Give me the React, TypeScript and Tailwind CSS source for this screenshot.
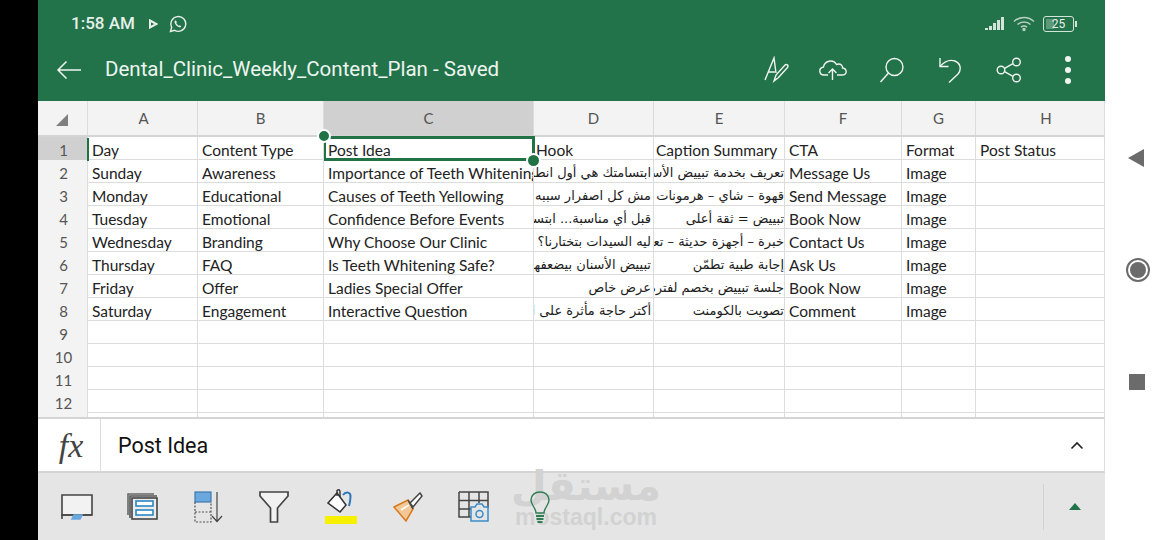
const cols = ["A", "B", "C", "D", "E", "F", "G", "H"];
const rows: (string | null)[][] = [
  ["Day", "Content Type", "Post Idea", "Hook", "Caption Summary", "CTA", "Format", "Post Status"],
  ["Sunday", "Awareness", "Importance of Teeth Whitening", "ابتسامتك هي أول انطباع", "تعريف بخدمة تبييض الأسنان", "Message Us", "Image", ""],
  ["Monday", "Educational", "Causes of Teeth Yellowing", "مش كل اصفرار سببه", "قهوة – شاي – هرمونات", "Send Message", "Image", ""],
  ["Tuesday", "Emotional", "Confidence Before Events", "قبل أي مناسبة... ابتسامتك", "تبييض = ثقة أعلى", "Book Now", "Image", ""],
  ["Wednesday", "Branding", "Why Choose Our Clinic", "ليه السيدات بتختارنا؟", "خبرة – أجهزة حديثة – تعامل راقي", "Contact Us", "Image", ""],
  ["Thursday", "FAQ", "Is Teeth Whitening Safe?", "تبييض الأسنان بيضعفها؟ لا", "إجابة طبية تطمّن", "Ask Us", "Image", ""],
  ["Friday", "Offer", "Ladies Special Offer", "عرض خاص", "جلسة تبييض بخصم لفترة محدودة", "Book Now", "Image", ""],
  ["Saturday", "Engagement", "Interactive Question", "أكتر حاجة مأثرة على ابتسامتك", "تصويت بالكومنت", "Comment", "Image", ""],
  ["", "", "", "", "", "", "", ""],
  ["", "", "", "", "", "", "", ""],
  ["", "", "", "", "", "", "", ""],
  ["", "", "", "", "", "", "", ""],
];

const gridCols = "grid grid-cols-[50px_110px_126px_210px_120px_131px_117px_74px_129px]";

function Cell({ value, column }: { value: string | null; column: number }) {
  const isHeadRtlCol = column === 3 || column === 4;
  const isRtlRow = isHeadRtlCol && value !== "Hook" && value !== "Caption Summary";
  return (
    <div
      dir={isRtlRow ? "rtl" : "ltr"}
      className={`h-full overflow-hidden whitespace-nowrap border-r border-[#dcdcdc] ${
        isRtlRow
          ? `font-['DejaVu_Sans',sans-serif] text-[13px] leading-[26px] text-[#1c1c1c] ${column === 3 ? "pr-[2px]" : "pr-0"}`
          : `text-[15.5px] leading-[26px] text-[#222] ${isHeadRtlCol ? "pl-[2px]" : "pl-[4px]"}`
      }`}
    >
      {value}
    </div>
  );
}

function Table() {
  return (
    <div className="relative h-[317px] overflow-hidden bg-white font-['Lato',sans-serif]">
      <div className={`${gridCols} h-[36px] border-b-2 border-[#d4d4d4] bg-[#f3f3f3] text-[15px] text-[#555]`}>
        <div className="flex items-center justify-center border-r border-[#dcdcdc]">
          <svg width="14" height="14" viewBox="0 0 14 14" className="mr-[2px] mt-[3px]">
            <path d="M13 1V13H1Z" fill="#7f7f7f" />
          </svg>
        </div>
        {cols.map((c) => (
          <div
            key={c}
            className={`flex items-center justify-center border-r border-[#dcdcdc] ${c === "C" ? "bg-[#d0d0d0]" : ""} ${
              c === "H" ? "pl-[12px]" : c === "A" ? "pl-[2px]" : ""
            }`}
          >
            {c}
          </div>
        ))}
      </div>
      {rows.map((r, i) => (
        <div key={i} className={`${gridCols} h-[23px] border-b border-[#dcdcdc]`}>
          <div
            className={`border-r border-[#dcdcdc] pl-[2px] text-center text-[15px] leading-[26px] text-[#555] ${
              i === 0 ? "bg-[#d0d0d0]" : "bg-[#f3f3f3]"
            }`}
          >
            {i + 1}
          </div>
          {r.map((v, j) => (
            <Cell key={j} value={v} column={j} />
          ))}
        </div>
      ))}
      <div className={`${gridCols} h-[23px]`}>
        <div className="border-r border-[#dcdcdc] bg-[#f3f3f3]" />
        {cols.map((c) => (
          <div key={c} className="border-r border-[#dcdcdc]" />
        ))}
      </div>
      {/* selection overlay */}
      <div className="absolute left-[286px] top-[35px] h-[25px] w-[211px] border-[3px] border-[#217346] [border-left-width:2px]" />
      <div className="absolute left-[49px] top-[37px] h-[23px] w-[2px] bg-[#217346]" />
      <div className="absolute left-[279px] top-[28px] h-[14px] w-[14px] rounded-full border-2 border-white bg-[#217346]" />
      <div className="absolute left-[488px] top-[52px] h-[15px] w-[15px] rounded-full border-2 border-white bg-[#217346]" />
    </div>
  );
}

function Header() {
  return (
    <div className="flex h-[101px] flex-col bg-[#22734a] text-white">
      <div className="flex h-[46px] items-center pl-[33px] pr-[31px] pt-[2px]">
        <span className="font-['Roboto',sans-serif] text-[17px] font-medium text-[#e8f0ea]">1:58 AM</span>
        <svg width="10" height="10" viewBox="0 0 10 10" className="ml-[13px]" fill="none" stroke="#e8f0ea" strokeWidth="2">
          <path d="M2 1.5L8.5 5L2 8.5Z" />
        </svg>
        <svg width="18" height="18" viewBox="0 0 18 18" className="ml-[11px]" fill="none" stroke="#e8f0ea" strokeWidth="1.4">
          <path d="M1.5 16.5L2.7 12.2A7.4 7.4 0 1 1 5.6 15.3Z" />
          <path d="M6 5.5C5 6.5 5.5 8.5 7.3 10.4C9.2 12.2 11.2 12.8 12.3 11.7L11 10.2L9.8 10.8C8.8 10.3 7.8 9.2 7.3 8.1L7.9 7L6.8 5.4Z" fill="#e8f0ea" stroke="none" />
        </svg>
        <div className="ml-auto flex items-center">
          <svg width="22" height="14" viewBox="0 0 22 14" fill="#d5e4da">
            <rect x="0" y="11" width="3" height="2" />
            <rect x="4" y="9" width="3" height="4" />
            <rect x="8" y="6" width="3" height="7" />
            <rect x="12" y="3" width="3" height="10" />
            <rect x="16" y="0" width="3" height="13" />
          </svg>
          <svg width="24" height="16" viewBox="0 0 24 16" fill="none" stroke="#b9d0c1" strokeWidth="1.5" className="ml-[6px]">
            <path d="M1 5.5C6.5 0 15.5 0 21 5.5" />
            <path d="M4.5 8.5C8 5.2 14 5.2 17.5 8.5" />
            <path d="M8 11.2C9.8 9.8 12.2 9.8 14 11.2" />
            <circle cx="11" cy="13.5" r="1" fill="#d5e4da" />
          </svg>
          <div className="relative ml-[6px] flex h-[16px] w-[31px] items-center justify-center rounded-[3px] border border-[#d5e4da] font-['Roboto',sans-serif] text-[12px] leading-none text-[#e8f0ea]">
            <div className="absolute inset-y-[2px] left-[2px] w-[8px] bg-[#5f9a78]" />
            <span className="relative">25</span>
            <div className="absolute right-[-4px] top-[4px] h-[6px] w-[2px] bg-[#d5e4da]" />
          </div>
        </div>
      </div>
      <div className="flex h-[55px] items-center pb-[8px] pl-[18px] pr-[34px]">
        <svg width="26" height="20" viewBox="0 0 26 20" fill="none" stroke="#f0f5f1" strokeWidth="1.5">
          <path d="M25 10H2M10.5 1.5L2 10L10.5 18.5" />
        </svg>
        <span className="ml-[23px] font-['Roboto',sans-serif] text-[20.5px] text-[#eef5f0]">
          Dental_Clinic_Weekly_Content_Plan - Saved
        </span>
        <div className="ml-auto flex items-center">
          <svg width="26" height="28" viewBox="0 0 26 28" fill="none" stroke="#f0f5f1" strokeWidth="1.4">
            <path d="M1 24L10 2L12 17M4 16H11" />
            <path d="M10 25L12 19L21 9C22.5 7.5 25 9.5 23.7 11.3L14.5 21.5Z" />
          </svg>
          <svg width="30" height="22" viewBox="0 0 30 22" fill="none" stroke="#f0f5f1" strokeWidth="1.4" className="ml-[28px]">
            <path d="M10 16H6C1 16 0 9 5.5 8C6.5 2 15 -0.5 18.5 5.5C23 4 25 7 24.5 9C29 9.5 30 16 24 16H19" />
            <path d="M14.5 21V10M10.5 14L14.5 10L18.5 14" />
          </svg>
          <svg width="26" height="26" viewBox="0 0 26 26" fill="none" stroke="#f0f5f1" strokeWidth="1.4" className="ml-[31px]">
            <circle cx="15.5" cy="10" r="8.5" />
            <path d="M9.5 16L1.5 25" />
          </svg>
          <svg width="24" height="26" viewBox="0 0 24 26" fill="none" stroke="#f0f5f1" strokeWidth="1.4" className="ml-[33px]">
            <path d="M2 1V9.5H10.5" />
            <path d="M2 9.5C6 5 11 2 17 4C23 6.5 23.5 13 20 17L11 25.5" />
          </svg>
          <svg width="26" height="26" viewBox="0 0 26 26" fill="none" stroke="#f0f5f1" strokeWidth="1.4" className="ml-[34px]">
            <circle cx="20.5" cy="5" r="3.8" />
            <circle cx="5" cy="13" r="3.8" />
            <circle cx="20.5" cy="21" r="3.8" />
            <path d="M8.5 11.3L17 6.7M8.5 14.7L17 19.3" />
          </svg>
          <div className="ml-[43px] flex w-[6px] flex-col gap-[5px]">
            <div className="h-[6px] w-[6px] rounded-full bg-[#f0f5f1]" />
            <div className="h-[6px] w-[6px] rounded-full bg-[#f0f5f1]" />
            <div className="h-[6px] w-[6px] rounded-full bg-[#f0f5f1]" />
          </div>
        </div>
      </div>
    </div>
  );
}

function FormulaBar() {
  return (
    <div className="flex h-[56px] items-stretch border-y-2 border-[#d4d4d4] border-r border-r-[#dcdcdc] bg-white">
      <div className="flex w-[63px] items-center justify-center border-r border-[#dcdcdc] pl-[4px] pt-[2px] font-['Liberation_Serif',serif] text-[34px] italic leading-none text-[#444]">
        fx
      </div>
      <div className="flex items-center pl-[17px] pt-[1px] font-['Roboto',sans-serif] text-[21.5px] text-[#111]">Post Idea</div>
      <div className="ml-auto flex items-center pr-[20px]">
        <svg width="14" height="9" viewBox="0 0 14 9" fill="none" stroke="#222" strokeWidth="1.6">
          <path d="M1.5 7.5L7 2L12.5 7.5" />
        </svg>
      </div>
    </div>
  );
}

function Toolbar() {
  return (
    <div className="relative flex h-[67px] items-center bg-[#e5e5e5] pl-[23px]">
      {/* watermark */}
      <div className="pointer-events-none absolute left-[453px] top-[-14px] flex w-[190px] flex-col items-center text-[#d2d2d2]">
        <span className="font-['DejaVu_Sans',sans-serif] text-[41px] font-bold leading-[54px]">مستقل</span>
        <span className="mt-[-8px] font-['Liberation_Sans',sans-serif] text-[23px] font-bold leading-[24px]">mostaql.com</span>
      </div>
      <div className="relative flex items-center">
        <svg width="32" height="26" viewBox="0 0 32 26" fill="none" stroke="#444" strokeWidth="1.6">
          <path d="M1 1H31V21H1Z" fill="#f2f2f2" />
          <path d="M1 25V21H31" />
          <path d="M11 25L13 21H21L19 25Z" fill="#6aa8dd" stroke="#6aa8dd" />
        </svg>
        <svg width="31" height="27" viewBox="0 0 31 27" fill="none" className="ml-[34px]" strokeWidth="1.6">
          <path d="M1 22V1H27" stroke="#666" />
          <path d="M3 25V3H30" stroke="#555" />
          <rect x="5" y="5" width="25" height="21" stroke="#444" fill="#ececec" />
          <rect x="9" y="8" width="17" height="5" stroke="#2b86c5" fill="#fff" />
          <rect x="9" y="17" width="17" height="5" stroke="#2b86c5" fill="#fff" />
        </svg>
        <svg width="30" height="32" viewBox="0 0 30 32" fill="none" strokeWidth="1.2" className="ml-[36px]">
          <rect x="1" y="1" width="16" height="10" fill="#6aa8dd" stroke="#3b78b0" />
          <path d="M1 11V31H17V11M1 21H17" stroke="#555" strokeDasharray="2 1.5" />
          <path d="M23 1V30M18 25L23 30.5L28 25" stroke="#444" />
        </svg>
        <svg width="30" height="32" viewBox="0 0 30 32" fill="#f2f2f2" stroke="#444" strokeWidth="1.7" className="ml-[35px]">
          <path d="M1 1H29V5L18.5 17V31H11.5V17L1 5Z" />
        </svg>
        <div className="ml-[36px] flex w-[32px] flex-col items-center">
          <svg width="28" height="24" viewBox="0 0 28 24" fill="none">
            <path d="M1 14L10 4L19 16L13 23Z" fill="#fff" stroke="#333" strokeWidth="1.5" />
            <path d="M10 7V1.5C12 0 13 1 13 3V8" stroke="#333" strokeWidth="1.4" />
            <path d="M16 6C19 2 24 3 23.5 8C23.3 11 23 14 22 17" stroke="#2b77b8" strokeWidth="2" />
          </svg>
          <div className="mt-[3px] h-[8px] w-[32px] bg-[#f7f000]" />
        </div>
        <svg width="30" height="30" viewBox="0 0 30 30" fill="none" strokeWidth="1.5" className="ml-[36px]">
          <path d="M1 15L15 8L20 17L13 29Z" fill="#f2c896" stroke="#d9791d" />
          <path d="M15 8L20 17" stroke="#444" />
          <path d="M17 11L27 1L29 4L20 15Z" fill="#fff" stroke="#444" />
          <path d="M8 18L16 13" stroke="#fff" />
        </svg>
        <svg width="31" height="31" viewBox="0 0 31 31" fill="none" stroke="#444" strokeWidth="1.5" className="ml-[35px]">
          <path d="M1 1H30V17M1 1V26H13M1 9.5H30M1 18H13M11 1V26M21 1V12" />
          <path d="M13 16H17L19 13H24L26 16H30V30H13Z" fill="#e5e5e5" stroke="#3a8cc7" />
          <circle cx="21.5" cy="23" r="3.5" stroke="#3a8cc7" />
        </svg>
        <svg width="20" height="32" viewBox="0 0 20 32" fill="none" stroke="#2f7d55" strokeWidth="1.4" className="ml-[41px]">
          <path d="M6 22C6 17 1 14 1 9C1 4 5 1 10 1C15 1 19 4 19 9C19 14 14 17 14 22Z" />
          <path d="M6 25H14M6.5 28H13.5M7.5 31H12.5" strokeWidth="2" />
        </svg>
      </div>
      <div className="relative ml-auto flex h-[46px] w-[62px] items-center justify-center border-l border-[#d2d2d2]">
        <svg width="12" height="7" viewBox="0 0 12 7">
          <path d="M6 0L12 7H0Z" fill="#22734a" />
        </svg>
      </div>
    </div>
  );
}

export default function App() {
  return (
    <div className="flex h-[540px] w-[1170px] overflow-hidden bg-white">
      <div className="w-[38px] shrink-0 bg-black" />
      <div className="flex w-[1067px] shrink-0 flex-col">
        <Header />
        <Table />
        <FormulaBar />
        <Toolbar />
      </div>
      <div className="flex flex-1 flex-col items-center pr-[1px] pt-[148px]">
        <svg width="18" height="20" viewBox="0 0 18 20" className="mr-[2px]">
          <path d="M17 1V19L1 10Z" fill="#6b6b6b" />
        </svg>
        <div className="ml-[2px] mt-[90px] flex h-[24px] w-[24px] items-center justify-center rounded-full border-2 border-[#6b6b6b]">
          <div className="h-[16px] w-[16px] rounded-full bg-[#6b6b6b]" />
        </div>
        <div className="mt-[92px] h-[16px] w-[16px] bg-[#6b6b6b]" />
      </div>
    </div>
  );
}
